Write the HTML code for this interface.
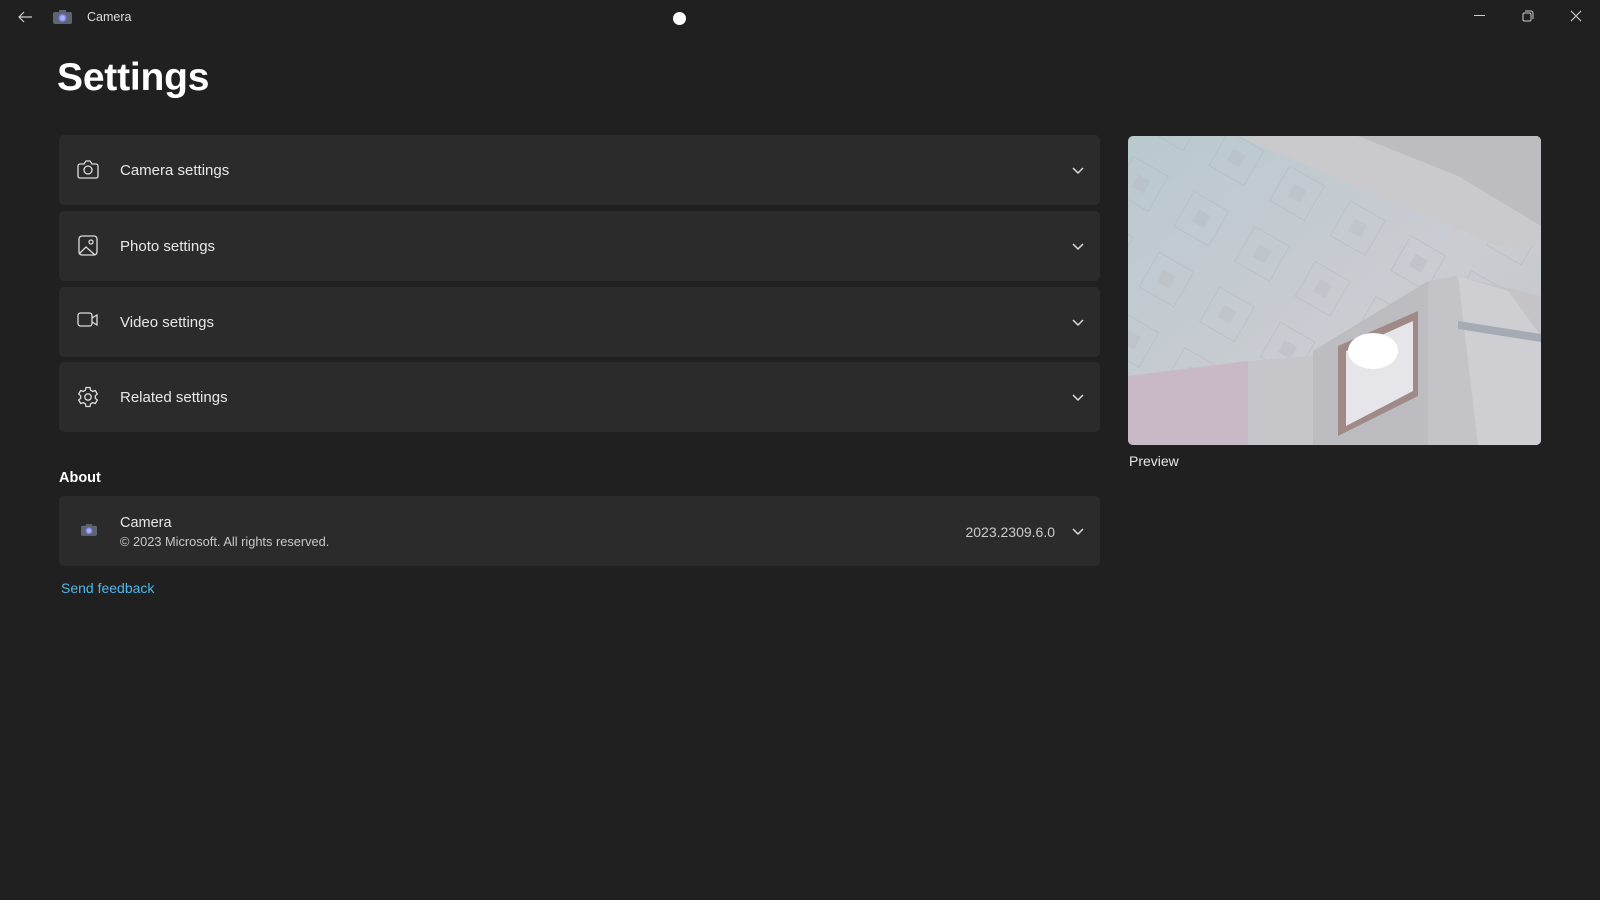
<!DOCTYPE html>
<html><head><meta charset="utf-8"><style>
*{margin:0;padding:0;box-sizing:border-box}
body{width:1600px;height:900px;background:#202020;font-family:"Segoe UI","Liberation Sans",sans-serif;color:#fff;position:relative;overflow:hidden}
.abs{position:absolute}
.card{position:absolute;left:59px;width:1041px;height:70px;background:#2b2b2b;border-radius:5px}
.card .lbl{position:absolute;left:61px;top:27px;font-size:15px;color:#e8e8e8}
.card svg.ic{position:absolute;left:18px;top:24px}
.chev{position:absolute;right:16px;top:32px}
</style></head><body>
<svg class="abs" style="left:17px;top:10px" width="16" height="14" viewBox="0 0 16 14"><path d="M15 7H2M7 2L2 7l5 5" stroke="#ccc" stroke-width="1.2" fill="none"/></svg>
<svg class="abs" style="left:53px;top:9px" width="19" height="15" viewBox="0 0 19 15"><rect x="0" y="3" width="19" height="12" rx="2" fill="#5d6670"/><rect x="6" y="1" width="7" height="3" fill="#5d6670"/><circle cx="9.5" cy="9" r="4" fill="#8b7cf0"/><circle cx="9.5" cy="9" r="2.5" fill="#9fb6ff"/></svg>
<div class="abs" style="left:87px;top:10px;font-size:12.5px;color:#ddd">Camera</div>
<div class="abs" style="left:673px;top:12px;width:13px;height:13px;border-radius:50%;background:#fff"></div>
<div class="abs" style="left:1474px;top:15px;width:11px;height:1px;background:#ccc"></div>
<svg class="abs" style="left:1522px;top:10px" width="12" height="12" viewBox="0 0 12 12"><rect x="1" y="3" width="8" height="8" rx="1.5" stroke="#ccc" fill="none"/><path d="M3 1h6a2 2 0 0 1 2 2v6" stroke="#ccc" fill="none"/></svg>
<svg class="abs" style="left:1570px;top:10px" width="12" height="12" viewBox="0 0 12 12"><path d="M1 1l10 10M11 1L1 11" stroke="#ccc" stroke-width="1.1"/></svg>
<div class="abs" style="left:57px;top:56px;font-size:39px;font-weight:bold;letter-spacing:-0.2px">Settings</div>

<div class="card" style="top:135px"><svg class="ic" width="22" height="20" viewBox="0 0 22 20"><path d="M3 5h4l2-3h4l2 3h4a2 2 0 0 1 2 2v10a2 2 0 0 1-2 2H3a2 2 0 0 1-2-2V7a2 2 0 0 1 2-2z" stroke="#ddd" stroke-width="1.3" fill="none"/><circle cx="11" cy="11" r="4" stroke="#ddd" stroke-width="1.3" fill="none"/></svg><div class="lbl">Camera settings</div><svg class="chev" width="12" height="8" viewBox="0 0 12 8"><path d="M1 1l5 5 5-5" stroke="#ddd" stroke-width="1.5" fill="none"/></svg></div>
<div class="card" style="top:211px"><svg class="ic" width="22" height="22" viewBox="0 0 22 22"><rect x="2" y="1" width="18" height="19" rx="3" stroke="#ddd" stroke-width="1.3" fill="none"/><path d="M2 19l7-7 9 8" stroke="#ddd" stroke-width="1.3" fill="none"/><circle cx="14" cy="7" r="2" stroke="#ddd" stroke-width="1.3" fill="none"/></svg><div class="lbl">Photo settings</div><svg class="chev" width="12" height="8" viewBox="0 0 12 8"><path d="M1 1l5 5 5-5" stroke="#ddd" stroke-width="1.5" fill="none"/></svg></div>
<div class="card" style="top:287px"><svg class="ic" width="22" height="18" viewBox="0 0 22 18"><rect x="1" y="2" width="14" height="13" rx="2.5" stroke="#ddd" stroke-width="1.3" fill="none"/><path d="M15 7l5-3v10l-5-3" stroke="#ddd" stroke-width="1.3" fill="none"/></svg><div class="lbl">Video settings</div><svg class="chev" width="12" height="8" viewBox="0 0 12 8"><path d="M1 1l5 5 5-5" stroke="#ddd" stroke-width="1.5" fill="none"/></svg></div>
<div class="card" style="top:362px"><svg class="ic" width="22" height="22" viewBox="0 0 22 22"><path d="M9 1.5h4l.6 2.7 2.1 1.2 2.6-.9 2 3.5-2 1.8v2.4l2 1.8-2 3.5-2.6-.9-2.1 1.2-.6 2.7H9l-.6-2.7-2.1-1.2-2.6.9-2-3.5 2-1.8V9.8l-2-1.8 2-3.5 2.6.9 2.1-1.2z" stroke="#ddd" stroke-width="1.3" fill="none" stroke-linejoin="round"/><circle cx="11" cy="11" r="3.2" stroke="#ddd" stroke-width="1.3" fill="none"/></svg><div class="lbl">Related settings</div><svg class="chev" width="12" height="8" viewBox="0 0 12 8"><path d="M1 1l5 5 5-5" stroke="#ddd" stroke-width="1.5" fill="none"/></svg></div>

<div class="abs" style="left:59px;top:470px;font-size:14.5px;font-weight:600">About</div>
<div class="card" style="top:496px"><svg class="abs" style="left:22px;top:27px" width="16" height="13" viewBox="0 0 19 15"><rect x="0" y="3" width="19" height="12" rx="2" fill="#5d6670"/><rect x="6" y="1" width="7" height="3" fill="#5d6670"/><circle cx="9.5" cy="9" r="4" fill="#8b7cf0"/><circle cx="9.5" cy="9" r="2.5" fill="#9fb6ff"/></svg>
<div class="abs" style="left:61px;top:19px;font-size:14.5px;color:#e8e8e8">Camera</div>
<div class="abs" style="left:61px;top:38px;font-size:12.8px;color:#c8c8c8">© 2023 Microsoft. All rights reserved.</div>
<div class="abs" style="right:45px;top:28px;font-size:14px;color:#ccc">2023.2309.6.0</div>
<svg class="chev" style="top:32px" width="12" height="8" viewBox="0 0 12 8"><path d="M1 1l5 5 5-5" stroke="#ddd" stroke-width="1.5" fill="none"/></svg></div>
<div class="abs" style="left:61px;top:580px;font-size:14px;color:#4cb8ea">Send feedback</div>

<svg class="abs" style="left:1128px;top:136px;border-radius:5px" width="413" height="309" viewBox="0 0 413 309">
<defs><linearGradient id="g1" x1="0" y1="0" x2="1" y2="1"><stop offset="0" stop-color="#b9c9ce"/><stop offset="0.6" stop-color="#cbccd2"/><stop offset="1" stop-color="#c3c3ca"/></linearGradient>
<pattern id="p" width="70" height="70" patternUnits="userSpaceOnUse" patternTransform="rotate(30)"><rect x="15" y="15" width="40" height="40" stroke="#b0b5bd" stroke-width="1" fill="none"/><rect x="28" y="28" width="14" height="14" fill="#aeaeb8" opacity=".5"/></pattern></defs>
<rect width="413" height="309" fill="url(#g1)"/>
<rect width="413" height="309" fill="url(#p)" opacity=".5"/>
<polygon points="110,0 413,0 413,110 370,110" fill="#cacacd"/>
<polygon points="230,0 413,0 413,90 330,40" fill="#bdbdc0"/>
<polygon points="0,240 120,225 120,309 0,309" fill="#c9b8c6"/>
<polygon points="120,225 185,220 185,309 120,309" fill="#c6c6ca"/>
<polygon points="185,215 300,145 300,309 185,309" fill="#bcbcc1"/>
<polygon points="210,210 290,175 290,260 210,300" fill="#a08a88"/>
<polygon points="218,215 285,185 285,255 218,290" fill="#e6e6ea"/>
<ellipse cx="245" cy="215" rx="25" ry="18" fill="#fff"/>
<polygon points="300,145 330,140 413,160 413,309 300,309" fill="#c4c4c8"/>
<polygon points="330,140 380,155 413,200 413,309 350,309" fill="#cfcfd3"/>
<polygon points="330,185 413,198 413,206 330,193" fill="#a5abb3"/>
</svg>
<div class="abs" style="left:1129px;top:453px;font-size:14px;color:#e8e8e8">Preview</div>
</body></html>
